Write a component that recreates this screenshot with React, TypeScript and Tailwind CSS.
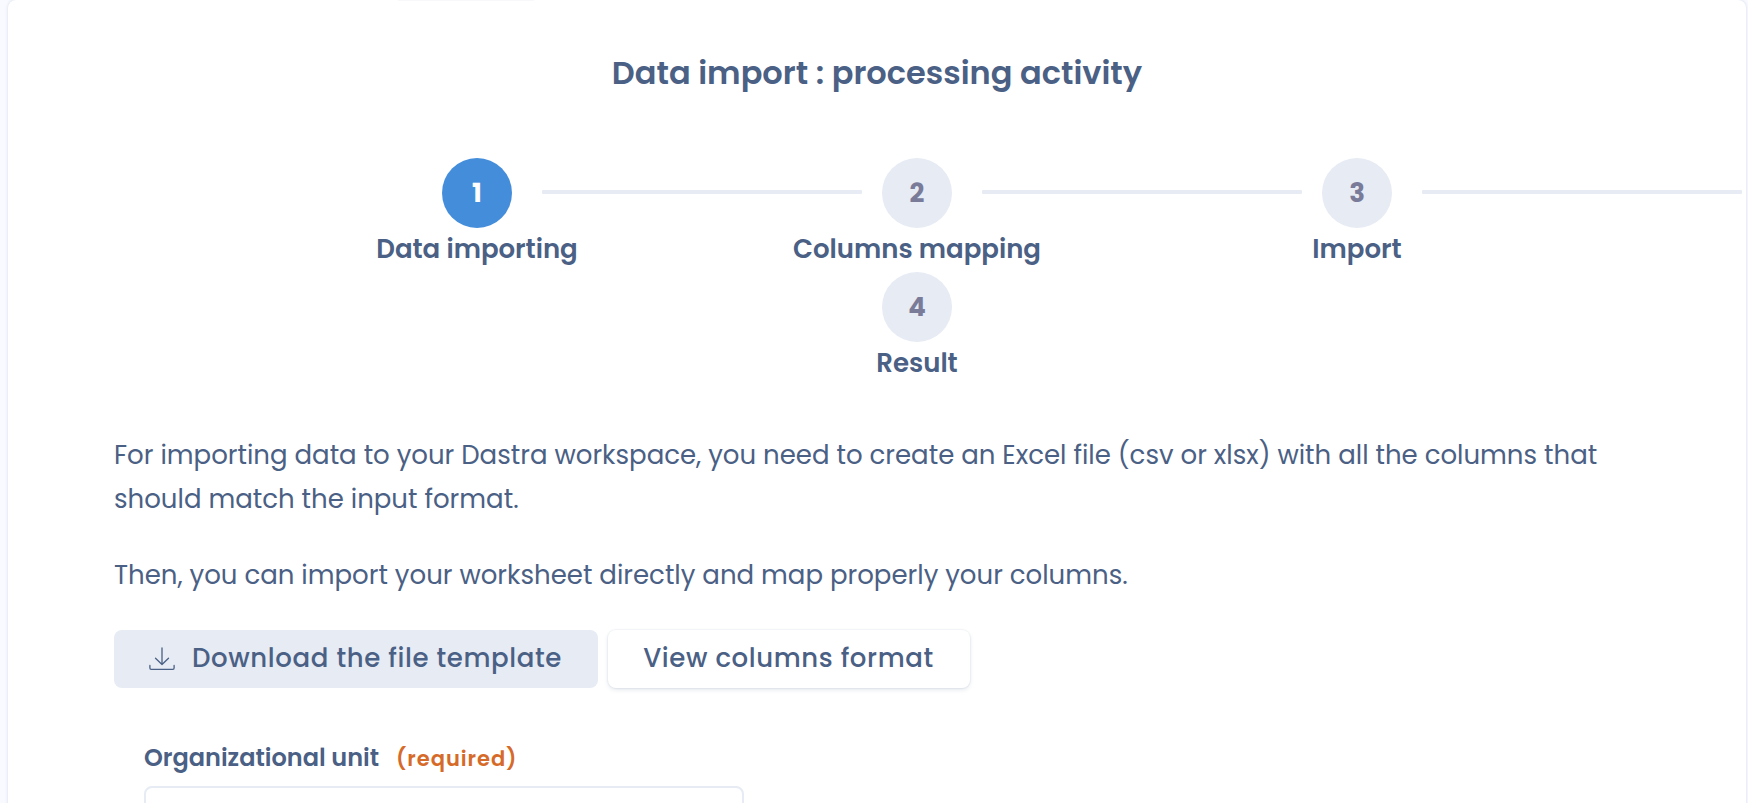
type StepData = {
  number: number;
  label: string;
  active?: boolean;
  connected?: boolean;
};

const steps: StepData[] = [
  { number: 1, label: "Data importing", active: true, connected: true },
  { number: 2, label: "Columns mapping", connected: true },
  { number: 3, label: "Import", connected: true },
];

function Step({ number, label, active, connected }: StepData) {
  return (
    <li className="w-[440px] shrink-0">
      <div className="flex items-center">
        <span
          className={`flex size-[70px] shrink-0 items-center justify-center rounded-full text-[26px] font-bold ${
            active ? "bg-[#448ddb] text-white" : "bg-[#e6ebf4] text-[#797b99]"
          }`}
        >
          {number}
        </span>
        {connected && <span className="mb-0.5 ml-[30px] h-1 w-[320px] rounded-[1px] bg-[#e7ecf4]" />}
      </div>
      <div className="flex h-11 w-[70px] justify-center">
        <span className="text-[26px] leading-[43px] font-semibold whitespace-nowrap">{label}</span>
      </div>
    </li>
  );
}

function DownloadIcon() {
  return (
    <svg className="size-[26px]" viewBox="0 0 26 26" fill="none" stroke="currentColor" strokeWidth="1.3" strokeLinecap="round" strokeLinejoin="round">
      <path d="M13 2v16.500M6.500 12.200l6.500 6.300 6.500-6.300" />
      <path d="M.9 19.500v2.600c0 .8.4 1.200 1.200 1.200h21.800c.8 0 1.200-.4 1.200-1.200v-2.600" />
    </svg>
  );
}

export default function App() {
  return (
    <div className="h-screen overflow-hidden bg-[#f8faff] pr-0.5 pl-2 font-['Poppins','Inter',sans-serif] text-[#4a6084]">
      <main className="relative h-[900px] rounded-t-lg bg-white shadow-[0_0_3px_rgba(74,96,132,0.22)]">
        <span className="absolute top-0 left-[390px] h-px w-[136px] bg-[#f8f8fa]" />

        <h1 className="pt-[53px] text-center text-[32px] leading-10 font-semibold">
          Data import : processing activity
        </h1>

        <ol className="flex pt-[65px] pl-[434px]">
          {steps.map((step) => (
            <Step key={step.number} {...step} />
          ))}
        </ol>
        <ol className="flex pl-[874px]">
          <Step number={4} label="Result" />
        </ol>

        <section className="pt-[47px] pl-[106px]">
          <div className="flex w-[1510px] flex-col gap-8 text-[26px] leading-[44px]">
            <p>
              For importing data to your Dastra workspace, you need to create an Excel file (csv or xlsx) with all the
              columns that should match the input format.
            </p>
            <p>Then, you can import your worksheet directly and map properly your columns.</p>
          </div>

          <div className="mt-[33px] flex gap-2.5 text-[26px] font-medium whitespace-nowrap">
            <button className="flex h-[58px] w-[484px] items-center gap-[17px] rounded-lg bg-[#e6ebf4] pb-px pl-[35px] tracking-[0.62px]">
              <DownloadIcon />
              Download the file template
            </button>
            <button className="flex h-[58px] w-[362px] items-center justify-center rounded-lg bg-white pr-px pb-px tracking-[0.6px] shadow-[0_0_1px_1px_rgba(74,96,132,0.06),0_2px_4px_rgba(74,96,132,0.14)]">
              View columns format
            </button>
          </div>

          <div className="mt-[52px] ml-[30px] flex w-[600px] flex-col gap-[9px]">
            <label className="flex items-baseline gap-[17px] text-2xl leading-9 font-semibold">
              Organizational unit
              <span className="text-[21px] font-semibold tracking-[1px] text-[#d66a29]">(required)</span>
            </label>
            <input className="h-16 w-full rounded-lg border-2 border-[#e6ebf4] bg-white px-4 text-2xl" />
          </div>
        </section>
      </main>
    </div>
  );
}
